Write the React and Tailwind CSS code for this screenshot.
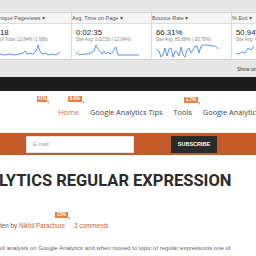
const cols = [
  {
    title: 'nique Pageviews ▾',
    value: '18',
    sub: 'of Total: 12.84% (1,686)',
    points: '0,11 5,12 10,11 15,12 20,11 23,10 25,8 27,11 30,10 33,11 35,9 37,6 38,2 40,8 42,11 45,10 48,12 52,11 56,12 59,10 60,9',
  },
  {
    title: 'Avg. Time on Page ▾',
    value: '0:02:35',
    sub: 'Site Avg: 0:02:50 (-12.64%)',
    points: '0,9 3,12 8,11 12,11 15,10 18,8 20,2 22,6 24,8 26,11 28,8 30,11 32,9 34,11 36,10 38,7 40,4 42,12 50,12 63,12',
  },
  {
    title: 'Bounce Rate ▾',
    value: '66.31%',
    sub: 'Site Avg: 83.68% (-20.76%)',
    points: '0,6 3,8 5,14 7,12 9,5 11,13 13,6 15,5 17,14 19,8 21,9 23,13 25,4 27,12 29,14 31,7 33,5 35,10 37,7 39,3 41,3 43,10 45,3 47,2 52,2 56,3 59,3 62,6',
  },
  {
    title: '% Exit ▾',
    value: '50.94%',
    sub: 'Site Avg: 49.1%',
    points: '0,10 3,11 6,9 9,10 12,5 15,7 18,3',
  },
];

const Badge = ({ text, className }) => (
  <span className={`absolute h-[6px] bg-[#e8823f] text-white text-[4.5px] leading-[6px] font-bold text-center ${className}`}>
    {text}
    <span className="absolute -bottom-[2px] -right-[2px] w-0 h-0 border-t-[3px] border-t-[#bbb] border-l-[3px] border-l-transparent" />
  </span>
);

const App = () => {
  return (
    <div className="w-[256px] h-[256px] overflow-hidden bg-white font-['Liberation_Sans',Arial,sans-serif]">
      {/* analytics panel */}
      <div className="bg-[#e7e7e7] h-[77px] pt-[12px]">
        <div className="grid grid-cols-[72px_80px_80px_1fr] bg-white border-y border-[#d4d4d4]">
          {cols.map((c, i) => (
            <div key={i} className={i < 3 ? 'border-r border-[#d9d9d9]' : ''}>
              <div className="h-[11px] bg-[#f5f5f5] border-b border-[#dedede] text-[5.5px] leading-[11px] text-[#555] pl-[4px] first:pl-0 whitespace-nowrap overflow-hidden">
                <span className={i === 0 ? '-ml-[1px]' : ''}>{c.title}</span>
              </div>
              <div className={`h-[35px] pt-[4px] whitespace-nowrap overflow-hidden ${i === 0 ? 'pl-0' : 'pl-[4px]'}`}>
                <div className="text-[7.8px] leading-[9px] text-[#222]">{c.value}</div>
                <div className="text-[4.5px] leading-[6px] text-[#888]">{c.sub}</div>
                <svg width="64" height="16" className="block">
                  <polyline points={c.points} fill="none" stroke="#5b95f0" strokeWidth="1" strokeLinejoin="round" />
                </svg>
              </div>
            </div>
          ))}
        </div>
        <div className="flex justify-end pt-[6px] pr-0 text-[5px] text-[#333] whitespace-nowrap">
          <span className="w-[19px] overflow-hidden">Show on</span>
        </div>
      </div>
      <div className="h-[14px] bg-[#1c1c1c]" />

      {/* nav */}
      <div className="relative h-[42px]">
        <Badge text="41%" className="left-[37px] top-[5px] w-[10px]" />
        <Badge text="9.6%" className="left-[68px] top-[5px] w-[14px]" />
        <Badge text="1.7%" className="left-[184px] top-[6px] w-[14px]" />
        <div className="flex gap-[11px] pl-[58px] pt-[17px] text-[7.4px] leading-[9px] text-[#444] whitespace-nowrap font-['Open_Sans',sans-serif]">
          <span className="text-[#d0714a]">Home</span>
          <span>Google Analytics Tips</span>
          <span>Tools</span>
          <span>Google Analytics Goals</span>
        </div>
      </div>

      {/* subscribe bar */}
      <div className="h-[22px] bg-[#c55b28] flex items-center pl-[26px]">
        <div className="w-[108px] h-[17px] bg-white border border-[#e2e2e2] text-[5.5px] leading-[15px] text-[#999] pl-[6px]">
          E-mail
        </div>
        <div className="ml-[37px] w-[46px] h-[17px] bg-[#2a2a2a] text-white text-[5.5px] leading-[17px] font-bold text-center">
          SUBSCRIBE
        </div>
      </div>

      {/* article */}
      <div className="pt-[16px] whitespace-nowrap">
        <h1 className="text-[16.5px] leading-[19px] font-bold text-[#2b2b2b] -ml-[1px] font-['Roboto',sans-serif]">
          LYTICS REGULAR EXPRESSION
        </h1>
        <div className="relative mt-[32px] text-[6.3px] leading-[8px] text-[#666]">
          <Badge text="15%" className="left-[55px] -top-[10px] w-[13px]" />
          ten by <span className="text-[#c0653a]">Nikhil Parachure</span>
          <span className="ml-[9px] text-[#c0653a]">3 comments</span>
        </div>
        <div className="mt-[13px] text-[6px] leading-[10px] text-[#666]">
          <div>of analysis on Google Analytics and when moved to topic of regular expressions one of</div>
          <div>the most important concepts for advanced segmentation in analytics is</div>
        </div>
      </div>
    </div>
  );
};

export default App;
